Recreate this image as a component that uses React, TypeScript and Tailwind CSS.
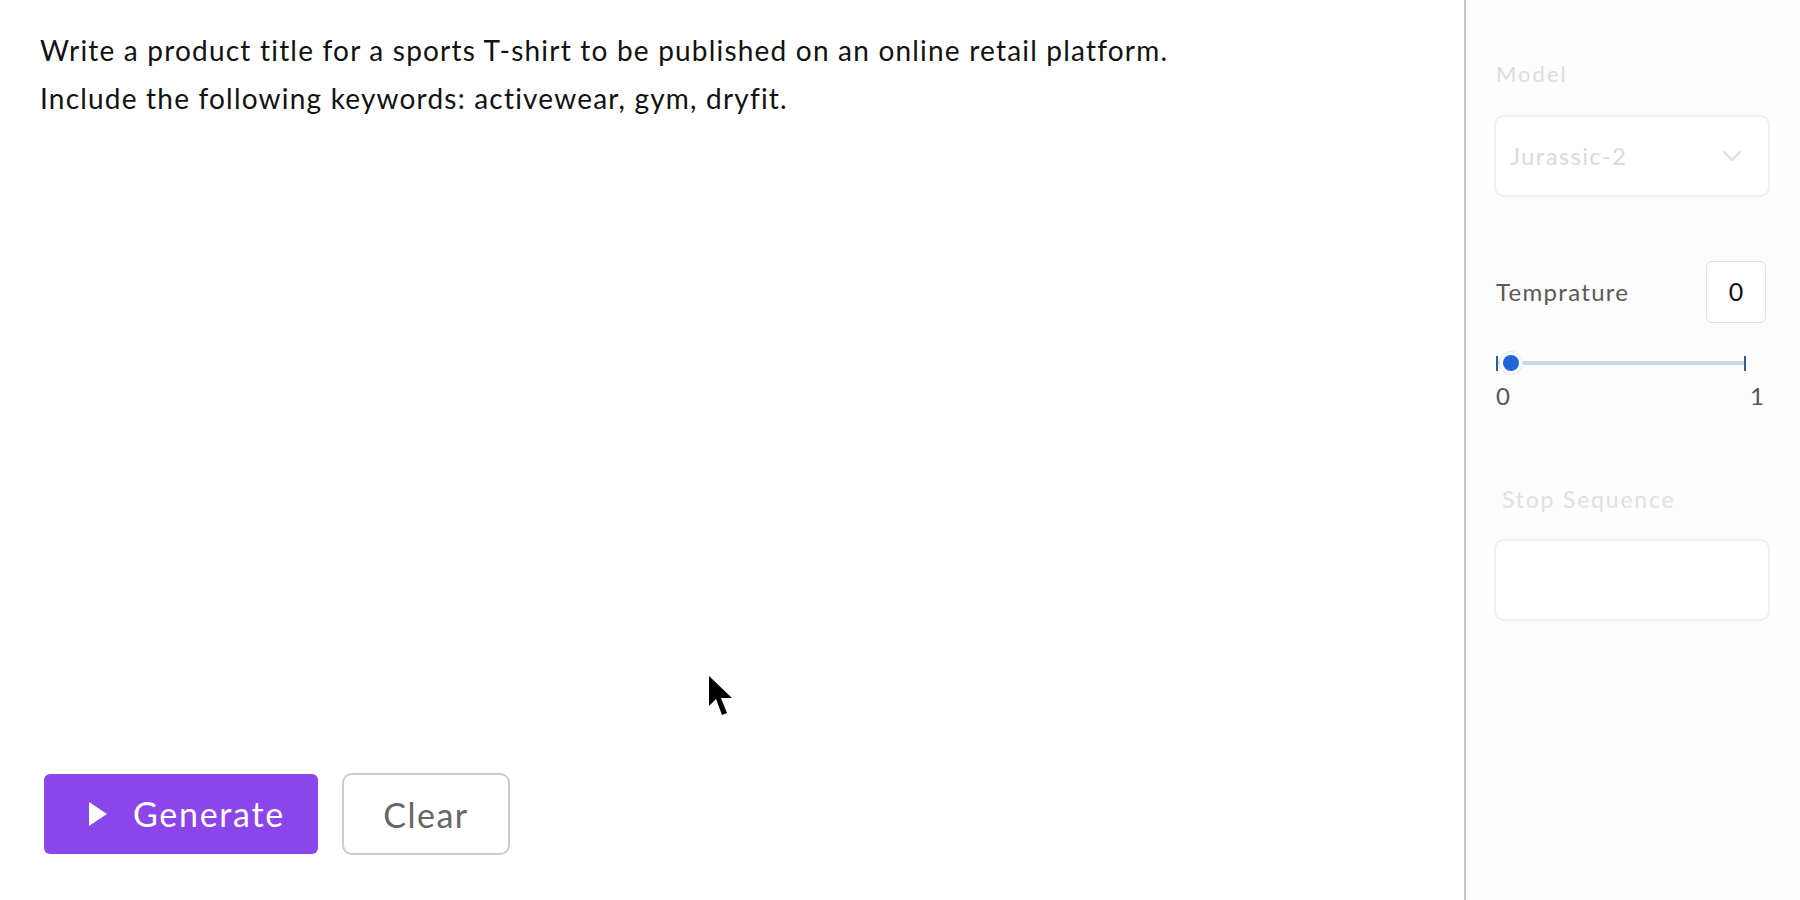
import { ChevronDown } from 'lucide-react';

const font = { fontFamily: 'Lato, "Open Sans", sans-serif' };

function Slider() {
  return (
    <div className="relative h-[24px] w-[250px] ml-[2px]">
      {/* track */}
      <div className="absolute left-0 right-0 top-[10px] h-[4px] bg-[#c9d9ec]" />
      {/* end ticks */}
      <div className="absolute left-0 top-[5px] h-[15px] w-[2px] bg-[#2f5f9a]" />
      <div className="absolute right-0 top-[5px] h-[15px] w-[2px] bg-[#2f5f9a]" />
      {/* thumb */}
      <div className="absolute left-[3px] top-0 flex h-[24px] w-[24px] items-center justify-center rounded-full border border-[#dfe7f2] bg-white">
        <div className="h-[16px] w-[16px] rounded-full bg-[#2166d9]" />
      </div>
    </div>
  );
}

function Cursor() {
  return (
    <svg
      className="absolute left-[708px] top-[675px]"
      width="26"
      height="44"
      viewBox="0 0 26 44"
    >
      <path d="M1 1 L1 31 L8 24 L14 40 L19 38 L13 23 L24 23 Z" fill="#000" />
    </svg>
  );
}

export default function App() {
  return (
    <div className="relative flex h-[900px] w-full bg-white" style={font}>
      {/* Prompt area */}
      <div className="flex h-full w-[1464px] flex-col justify-between">
        <div className="pl-[40px] pt-[26px] text-[28px] leading-[48px] tracking-[1.2px] text-[#111]">
          <p>Write a product title for a sports T-shirt to be published on an online retail platform.</p>
          <p>Include the following keywords: activewear, gym, dryfit.</p>
        </div>

        <div className="flex items-center gap-[24px] pb-[45px] pl-[44px]">
          <button
            type="button"
            className="flex h-[80px] w-[274px] items-center rounded-[6px] bg-[#8a46ea] pl-[45px] text-white"
          >
            <svg width="18" height="24" viewBox="0 0 18 24">
              <path d="M0 0 L18 12 L0 24 Z" fill="#fff" />
            </svg>
            <span className="ml-[26px] text-[34px] leading-none tracking-[1.7px]">Generate</span>
          </button>
          <button
            type="button"
            className="h-[82px] w-[168px] rounded-[10px] border-2 border-[#cccccc] bg-white text-[34px] tracking-[1.5px] text-[#666]"
          >
            Clear
          </button>
        </div>
      </div>

      {/* Divider */}
      <div className="h-full w-[2px] bg-[#c6c6c6]" />

      {/* Settings panel */}
      <div className="flex h-full flex-1 flex-col bg-[#fdfdfd] pl-[28px] pr-[30px] pt-[60px]">
        <div className="pl-[2px] text-[22px] leading-[28px] tracking-[2px] text-[#dcdcdc]">Model</div>
        <div className="mt-[27px] flex h-[82px] items-center justify-between rounded-[10px] border-2 border-[#f0f0f0] bg-white pl-[14px] pr-[20px]">
          <span className="text-[24px] tracking-[1.3px] text-[#dadada]">Jurassic-2</span>
          <ChevronDown size={32} strokeWidth={1.6} color="#dedede" />
        </div>

        <div className="mt-[64px] flex h-[62px] items-center justify-between pl-[2px] pr-[4px]">
          <span className="text-[24px] tracking-[1.3px] text-[#5a5a5a]">Temprature</span>
          <div className="flex h-[62px] w-[60px] items-center justify-center rounded-[6px] border border-[#e2e2e2] bg-white text-[25px] text-[#111]">
            0
          </div>
        </div>

        <div className="mt-[28px]">
          <Slider />
        </div>
        <div className="mt-[9px] flex justify-between pl-[2px] pr-[6px] text-[24px] leading-[24px] text-[#555]">
          <span>0</span>
          <span>1</span>
        </div>

        <div className="mt-[77px] pl-[8px] text-[23px] leading-[28px] tracking-[1.8px] text-[#e0e0e0]">
          Stop Sequence
        </div>
        <div className="mt-[26px] h-[82px] rounded-[10px] border-2 border-[#f0f0f0] bg-white" />
      </div>

      <Cursor />
    </div>
  );
}
